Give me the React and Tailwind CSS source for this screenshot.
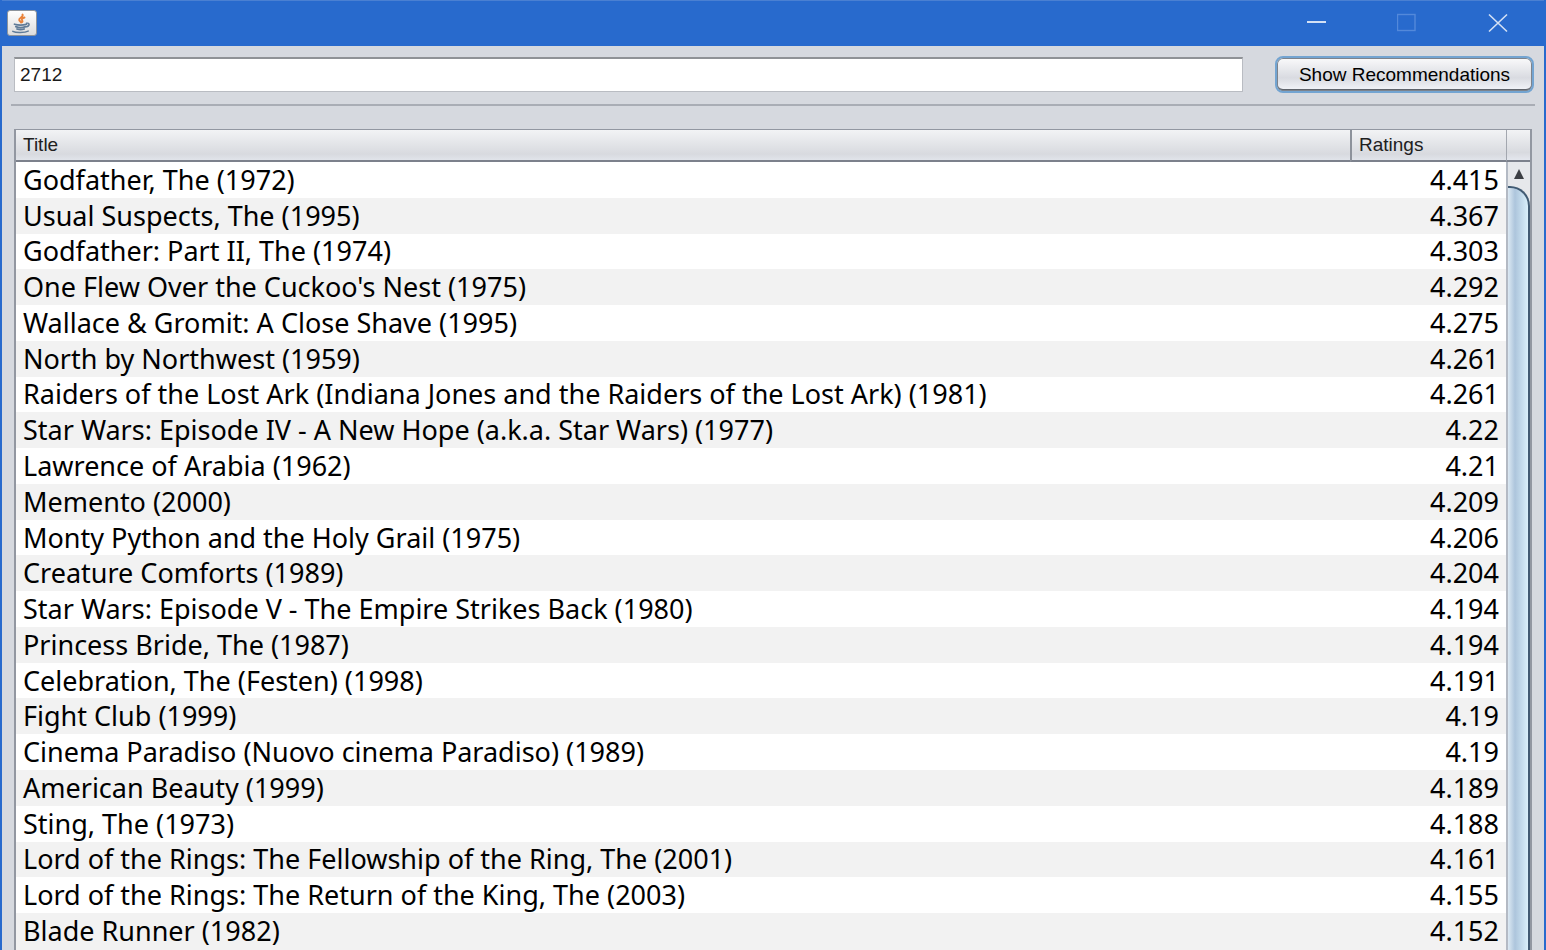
import React, { useState } from "react";

const movies = [
  ["Godfather, The (1972)", "4.415"],
  ["Usual Suspects, The (1995)", "4.367"],
  ["Godfather: Part II, The (1974)", "4.303"],
  ["One Flew Over the Cuckoo's Nest (1975)", "4.292"],
  ["Wallace & Gromit: A Close Shave (1995)", "4.275"],
  ["North by Northwest (1959)", "4.261"],
  ["Raiders of the Lost Ark (Indiana Jones and the Raiders of the Lost Ark) (1981)", "4.261"],
  ["Star Wars: Episode IV - A New Hope (a.k.a. Star Wars) (1977)", "4.22"],
  ["Lawrence of Arabia (1962)", "4.21"],
  ["Memento (2000)", "4.209"],
  ["Monty Python and the Holy Grail (1975)", "4.206"],
  ["Creature Comforts (1989)", "4.204"],
  ["Star Wars: Episode V - The Empire Strikes Back (1980)", "4.194"],
  ["Princess Bride, The (1987)", "4.194"],
  ["Celebration, The (Festen) (1998)", "4.191"],
  ["Fight Club (1999)", "4.19"],
  ["Cinema Paradiso (Nuovo cinema Paradiso) (1989)", "4.19"],
  ["American Beauty (1999)", "4.189"],
  ["Sting, The (1973)", "4.188"],
  ["Lord of the Rings: The Fellowship of the Ring, The (2001)", "4.161"],
  ["Lord of the Rings: The Return of the King, The (2003)", "4.155"],
  ["Blade Runner (1982)", "4.152"],
];

function JavaIcon() {
  return (
    <svg viewBox="0 0 30 26" className="h-[26px] w-[30px]" aria-hidden="true">
      <defs>
        <linearGradient id="tile" x1="0" y1="0" x2="0" y2="1">
          <stop offset="0" stopColor="#ffffff" />
          <stop offset="1" stopColor="#dcdcdc" />
        </linearGradient>
      </defs>
      <rect x="0.5" y="0.5" width="29" height="25" rx="2.5" fill="url(#tile)" stroke="#8d949c" />
      <g fill="none" strokeLinecap="round">
        <path d="M15.500 4.500c1.500 2.800-4.300 3-3.300 5.700.4 1 1.500 1.300 1.800 2.300M17.500 7.500c-2.500.8-3.300 1.800-2.300 3 .6.7.3 1.300-.4 1.800" stroke="#e8823a" strokeWidth="1.900" />
        <path d="M7.500 14.200c3.500 1 8.500 1 12 0M8.800 16.600c2.500 1 7.200 1 9.700 0M10 19c2.200.8 5 .8 7.200 0" stroke="#5f7b98" strokeWidth="1.700" />
        <path d="M19.500 13.300c3.400-1 3.600 2.700-.3 3.500M5.800 21.300c2.800 1.500 12 1.500 15.400-.2" stroke="#5f7b98" strokeWidth="1.500" />
      </g>
    </svg>
  );
}

function TitleBar() {
  return (
    <header className="flex h-[46px] shrink-0 items-center justify-between border-t border-[#4a80d2] bg-[#286acd] pb-px pl-[5px]">
      <JavaIcon />
      <div className="flex h-full">
        <button aria-label="Minimize" className="flex w-[90px] items-center justify-center">
          <svg viewBox="0 0 20 20" className="size-5"><path d="M0 9h19" stroke="#d4e1f5" strokeWidth="2" /></svg>
        </button>
        <button aria-label="Maximize" disabled className="flex w-[90px] items-center justify-center">
          <svg viewBox="0 0 20 20" className="size-5"><rect x="0.500" y="1.500" width="17.500" height="16" fill="none" stroke="#5389da" strokeWidth="1.400" /></svg>
        </button>
        <button aria-label="Close" className="flex w-[92px] items-center justify-center">
          <svg viewBox="0 0 20 20" className="size-5"><path d="M1 1.500l18 17M19 1.500l-18 17" stroke="#d4e1f5" strokeWidth="1.600" /></svg>
        </button>
      </div>
    </header>
  );
}

function Toolbar() {
  const [userId, setUserId] = useState("2712");
  return (
    <form className="mx-[9px] flex items-center gap-8 border-b-2 border-[#a9adb5] pt-[10px] pb-[11px] pr-px pl-[3px]" onSubmit={(e) => e.preventDefault()}>
      <input
        aria-label="User ID"
        value={userId}
        onChange={(e) => setUserId(e.target.value)}
        className="h-[35px] min-w-0 flex-1 border border-t-2 border-[#b9bcc2] border-t-[#8f9296] bg-white px-[5px] text-[19px] text-[#1a1a1a] outline-none"
      />
      <button className="h-[37px] w-[259px] rounded-[8px] border-2 border-[#73a4d1] bg-linear-to-b from-[#fafafb] via-[#d9dbe1] via-60% to-[#f4f6fb] pt-px text-[19px] text-black shadow-[inset_0_0_0_1px_#7d838c,inset_0_-2px_0_0_#5f646c]">
        Show Recommendations
      </button>
    </form>
  );
}

function ScrollBar() {
  return (
    <div className="flex w-[24px] shrink-0 flex-col" aria-hidden="true">
      <div className="h-[32px] shrink-0 border-b-2 border-l border-[#7c818c] border-l-[#a3a7af] bg-linear-to-b from-[#f2f3f5] via-[#d8dadf] via-75% to-[#e4e7ee]" />
      <div className="flex min-h-0 flex-1 flex-col border-l-2 border-[#b4bac4] bg-[#e6e8eb]">
        <div className="flex h-[24px] shrink-0 items-center justify-center">
          <svg viewBox="0 0 12 12" className="size-3"><path d="M6 1l5 10H1z" fill="#3c3f44" /></svg>
        </div>
        <div className="flex-1 rounded-tr-[20px] border-t-2 border-r-2 border-[#415b73] bg-linear-to-r from-[#dce9f3] via-[#adc5dc] via-35% to-[#d9f0fb]" />
      </div>
    </div>
  );
}

export default function App() {
  return (
    <main className="flex h-screen flex-col overflow-hidden border-x-2 border-[#286acd] bg-[#d6d9df] font-['Liberation_Sans',Arial,sans-serif]">
      <TitleBar />
      <Toolbar />
      <section className="mt-[23px] mr-[12px] ml-[12px] flex min-h-0 flex-1 border-x-2 border-t border-[#9297a1]">
        <div className="min-w-0 flex-1 bg-[#f2f2f2] pb-px">
          <table className="h-full w-full table-fixed border-separate border-spacing-0">
            <thead>
              <tr className="h-[32px] bg-linear-to-b from-[#f2f3f5] via-[#d8dadf] via-75% to-[#e4e7ee] text-left text-[19px] text-[#202020]">
                <th scope="col" className="h-[32px] border-b-2 border-[#7c818c] px-[7px] py-0 font-normal">Title</th>
                <th scope="col" className="h-[32px] w-[156px] border-b-2 border-l-2 border-[#7c818c] border-l-[#8d929b] px-[7px] py-0 font-normal">Ratings</th>
              </tr>
            </thead>
            <tbody className="font-['Noto_Sans',sans-serif] text-[27px] leading-8 text-black">
              {movies.map(([title, rating]) => (
                <tr key={title} className="odd:bg-white even:bg-[#f2f2f2]">
                  <td className="truncate px-[7px] py-0">{title}</td>
                  <td className="px-[7px] py-0 text-right">{rating}</td>
                </tr>
              ))}
            </tbody>
          </table>
        </div>
        <ScrollBar />
      </section>
    </main>
  );
}
